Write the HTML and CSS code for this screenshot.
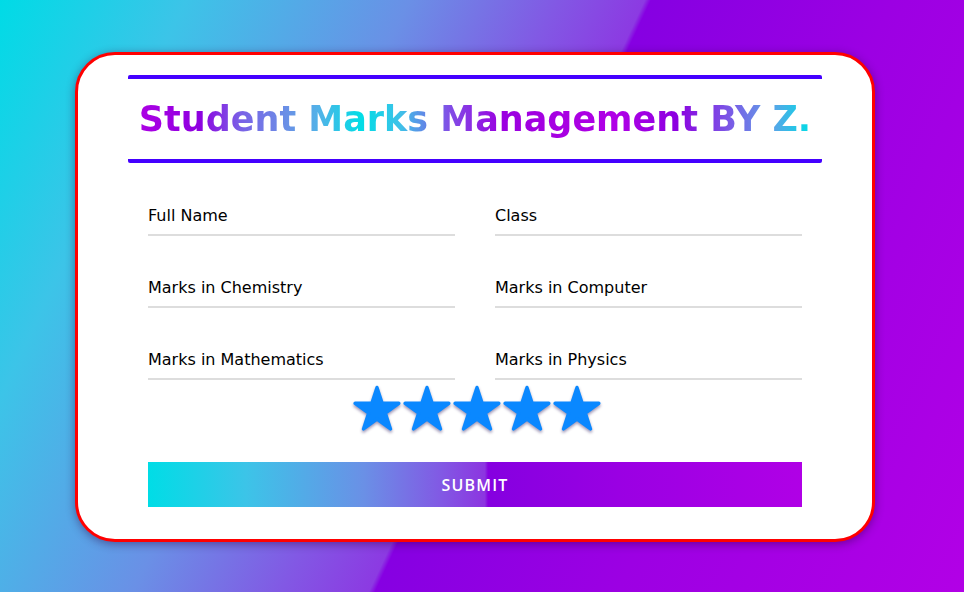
FILE: index.html
```html
<!DOCTYPE html>
<html lang="en">
<head>
<meta charset="utf-8">
<title>Student Marks Management</title>
<link rel="stylesheet" href="styles.css">
</head>
<body>
<div class="page">
  <div class="card">
    <h1 class="title"><span class="title-text">Student Marks Management BY Z.</span></h1>
    <form class="form">
      <div class="grid">
        <div class="field"><span class="label">Full Name</span></div>
        <div class="field"><span class="label">Class</span></div>
        <div class="field"><span class="label">Marks in Chemistry</span></div>
        <div class="field"><span class="label">Marks in Computer</span></div>
        <div class="field"><span class="label">Marks in Mathematics</span></div>
        <div class="field"><span class="label">Marks in Physics</span></div>
      </div>
      <div class="stars">
        <svg class="star" viewBox="0 -3 100 96"><polygon points="50,2 60.77,35.17 95.65,35.17 67.43,55.66 78.21,88.83 50,68.33 21.79,88.83 32.57,55.66 4.35,35.17 39.23,35.17"/></svg>
        <svg class="star" viewBox="0 -3 100 96"><polygon points="50,2 60.77,35.17 95.65,35.17 67.43,55.66 78.21,88.83 50,68.33 21.79,88.83 32.57,55.66 4.35,35.17 39.23,35.17"/></svg>
        <svg class="star" viewBox="0 -3 100 96"><polygon points="50,2 60.77,35.17 95.65,35.17 67.43,55.66 78.21,88.83 50,68.33 21.79,88.83 32.57,55.66 4.35,35.17 39.23,35.17"/></svg>
        <svg class="star" viewBox="0 -3 100 96"><polygon points="50,2 60.77,35.17 95.65,35.17 67.43,55.66 78.21,88.83 50,68.33 21.79,88.83 32.57,55.66 4.35,35.17 39.23,35.17"/></svg>
        <svg class="star" viewBox="0 -3 100 96"><polygon points="50,2 60.77,35.17 95.65,35.17 67.43,55.66 78.21,88.83 50,68.33 21.79,88.83 32.57,55.66 4.35,35.17 39.23,35.17"/></svg>
      </div>
      <button type="button" class="submit">SUBMIT</button>
    </form>
  </div>
</div>
</body>
</html>
```

FILE: styles.css
```css
html, body {
  margin: 0;
  padding: 0;
  height: 100%;
}

body {
  font-family: "DejaVu Sans", "Liberation Sans", sans-serif;
  background: linear-gradient(115deg,
    #00dbe6 0%,
    #3cc4e8 15%,
    #6a90e6 33%,
    #8258e4 45%,
    #8c3ae2 52%,
    #8600e2 52.5%,
    #9c00e3 72%,
    #b200e6 100%);
  overflow: hidden;
}

.page {
  height: 100%;
  display: flex;
  align-items: center;
  justify-content: center;
  padding-right: 14px;
  padding-top: 2px;
  box-sizing: border-box;
}

.card {
  width: 800px;
  box-sizing: border-box;
  background: #fff;
  border: 3px solid #ff0000;
  border-radius: 40px;
  padding: 20px 50px 32px 50px;
  box-shadow: 0 2px 10px rgba(40, 0, 60, 0.45);
}

.title {
  margin: 0;
  border-top: 4px solid #4400ff;
  border-bottom: 4px solid #4400ff;
  border-radius: 2px;
  line-height: 80px;
  text-align: center;
  font-size: 35px;
  font-weight: bold;
}

.title-text {
  display: inline-block;
  background: linear-gradient(90deg,
    #ac00e4 0%,
    #8e00e0 9%,
    #7a60e6 15%,
    #6a90e6 22%,
    #50b4e8 27%,
    #00dde6 33%,
    #40c0e8 39%,
    #8050e6 46%,
    #9a00e0 54%,
    #a800e2 63%,
    #b000e6 71%,
    #8c00e0 80%,
    #7a5ae6 88%,
    #60a0e8 94%,
    #00dde6 100%);
  -webkit-background-clip: text;
  background-clip: text;
  color: transparent;
}

.form {
  margin: 0;
  padding: 0 20px;
}

.grid {
  margin-top: 43px;
  display: grid;
  grid-template-columns: 1fr 1fr;
  column-gap: 40px;
  row-gap: 42px;
}

.field {
  line-height: 20px;
  padding-bottom: 8px;
  border-bottom: 2px solid #dddddd;
}

.label {
  font-size: 16px;
  color: #000;
}

.stars {
  margin-top: 5px;
  display: flex;
  justify-content: center;
  gap: 2px;
  padding-left: 4px;
}

.star {
  width: 48px;
  height: 46px;
  fill: #0a88ff;
  stroke: #0a88ff;
  stroke-width: 7;
  stroke-linejoin: round;
  filter: drop-shadow(0 2px 1.5px rgba(40, 20, 90, 0.45));
}

.submit {
  display: block;
  width: 100%;
  height: 45px;
  margin-top: 31px;
  border: none;
  padding: 0;
  color: #fff;
  font-family: "Open Sans", "DejaVu Sans", sans-serif;
  font-size: 16px;
  font-weight: 600;
  letter-spacing: 1.2px;
  background: linear-gradient(90deg,
    #00dde6 0%,
    #3cc4e8 15%,
    #6a90e6 33%,
    #8258e4 45%,
    #8c35e0 51.5%,
    #8500e0 52%,
    #9a00e3 72%,
    #b000e6 100%);
  cursor: pointer;
}
```
